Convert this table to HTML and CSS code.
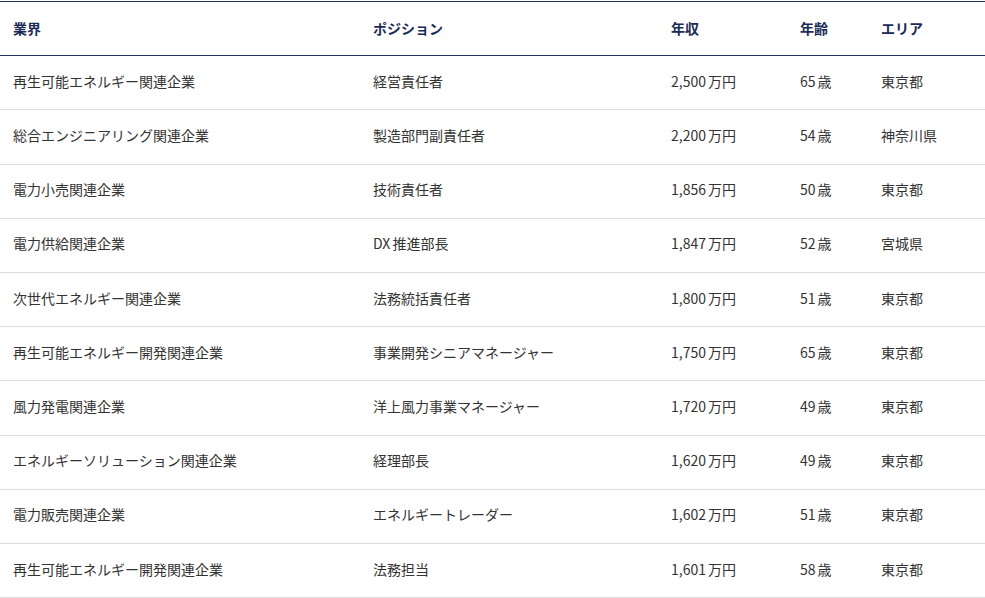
FILE: index.html
```html
<!DOCTYPE html>
<html lang="ja">
<head>
<meta charset="utf-8">
<link rel="stylesheet" href="styles.css">
</head>
<body>
<table class="jobs">
  <colgroup>
    <col class="c1"><col class="c2"><col class="c3"><col class="c4"><col class="c5">
  </colgroup>
  <thead>
    <tr><th>業界</th><th>ポジション</th><th>年収</th><th>年齢</th><th>エリア</th></tr>
  </thead>
  <tbody>
    <tr><td>再生可能エネルギー関連企業</td><td>経営責任者</td><td>2,500<span class="unit">万円</span></td><td>65<span class="unit">歳</span></td><td>東京都</td></tr>
    <tr><td>総合エンジニアリング関連企業</td><td>製造部門副責任者</td><td>2,200<span class="unit">万円</span></td><td>54<span class="unit">歳</span></td><td>神奈川県</td></tr>
    <tr><td>電力小売関連企業</td><td>技術責任者</td><td>1,856<span class="unit">万円</span></td><td>50<span class="unit">歳</span></td><td>東京都</td></tr>
    <tr><td>電力供給関連企業</td><td>DX<span class="unit">推進部長</span></td><td>1,847<span class="unit">万円</span></td><td>52<span class="unit">歳</span></td><td>宮城県</td></tr>
    <tr><td>次世代エネルギー関連企業</td><td>法務統括責任者</td><td>1,800<span class="unit">万円</span></td><td>51<span class="unit">歳</span></td><td>東京都</td></tr>
    <tr><td>再生可能エネルギー開発関連企業</td><td>事業開発シニアマネージャー</td><td>1,750<span class="unit">万円</span></td><td>65<span class="unit">歳</span></td><td>東京都</td></tr>
    <tr><td>風力発電関連企業</td><td>洋上風力事業マネージャー</td><td>1,720<span class="unit">万円</span></td><td>49<span class="unit">歳</span></td><td>東京都</td></tr>
    <tr><td>エネルギーソリューション関連企業</td><td>経理部長</td><td>1,620<span class="unit">万円</span></td><td>49<span class="unit">歳</span></td><td>東京都</td></tr>
    <tr><td>電力販売関連企業</td><td>エネルギートレーダー</td><td>1,602<span class="unit">万円</span></td><td>51<span class="unit">歳</span></td><td>東京都</td></tr>
    <tr><td>再生可能エネルギー開発関連企業</td><td>法務担当</td><td>1,601<span class="unit">万円</span></td><td>58<span class="unit">歳</span></td><td>東京都</td></tr>
  </tbody>
</table>
</body>
</html>
```
FILE: styles.css
```css
html, body {
  margin: 0;
  padding: 0;
  background: #fff;
}
body {
  padding-top: 1px;
  font-family: "Noto Sans CJK JP", "Noto Sans", sans-serif;
  font-size: 14px;
  color: #333;
}
.jobs {
  width: 985px;
  border-collapse: collapse;
  table-layout: fixed;
}
.c1 { width: 360px; }
.c2 { width: 298px; }
.c3 { width: 129px; }
.c4 { width: 81px; }
.c5 { width: 117px; }
.jobs th,
.jobs td {
  text-align: left;
  padding: 16px 13px;
  line-height: 21.2px;
  white-space: nowrap;
}
.jobs thead th {
  color: #1b2b55;
  font-weight: 700;
  border-top: 1px solid #1f3461;
  border-bottom: 1px solid #1f3461;
}
.jobs tbody td {
  padding-top: 14.5px;
  padding-bottom: 17.5px;
  border-bottom: 1px solid #dcdcdc;
}
.unit {
  margin-left: 2px;
}
```
